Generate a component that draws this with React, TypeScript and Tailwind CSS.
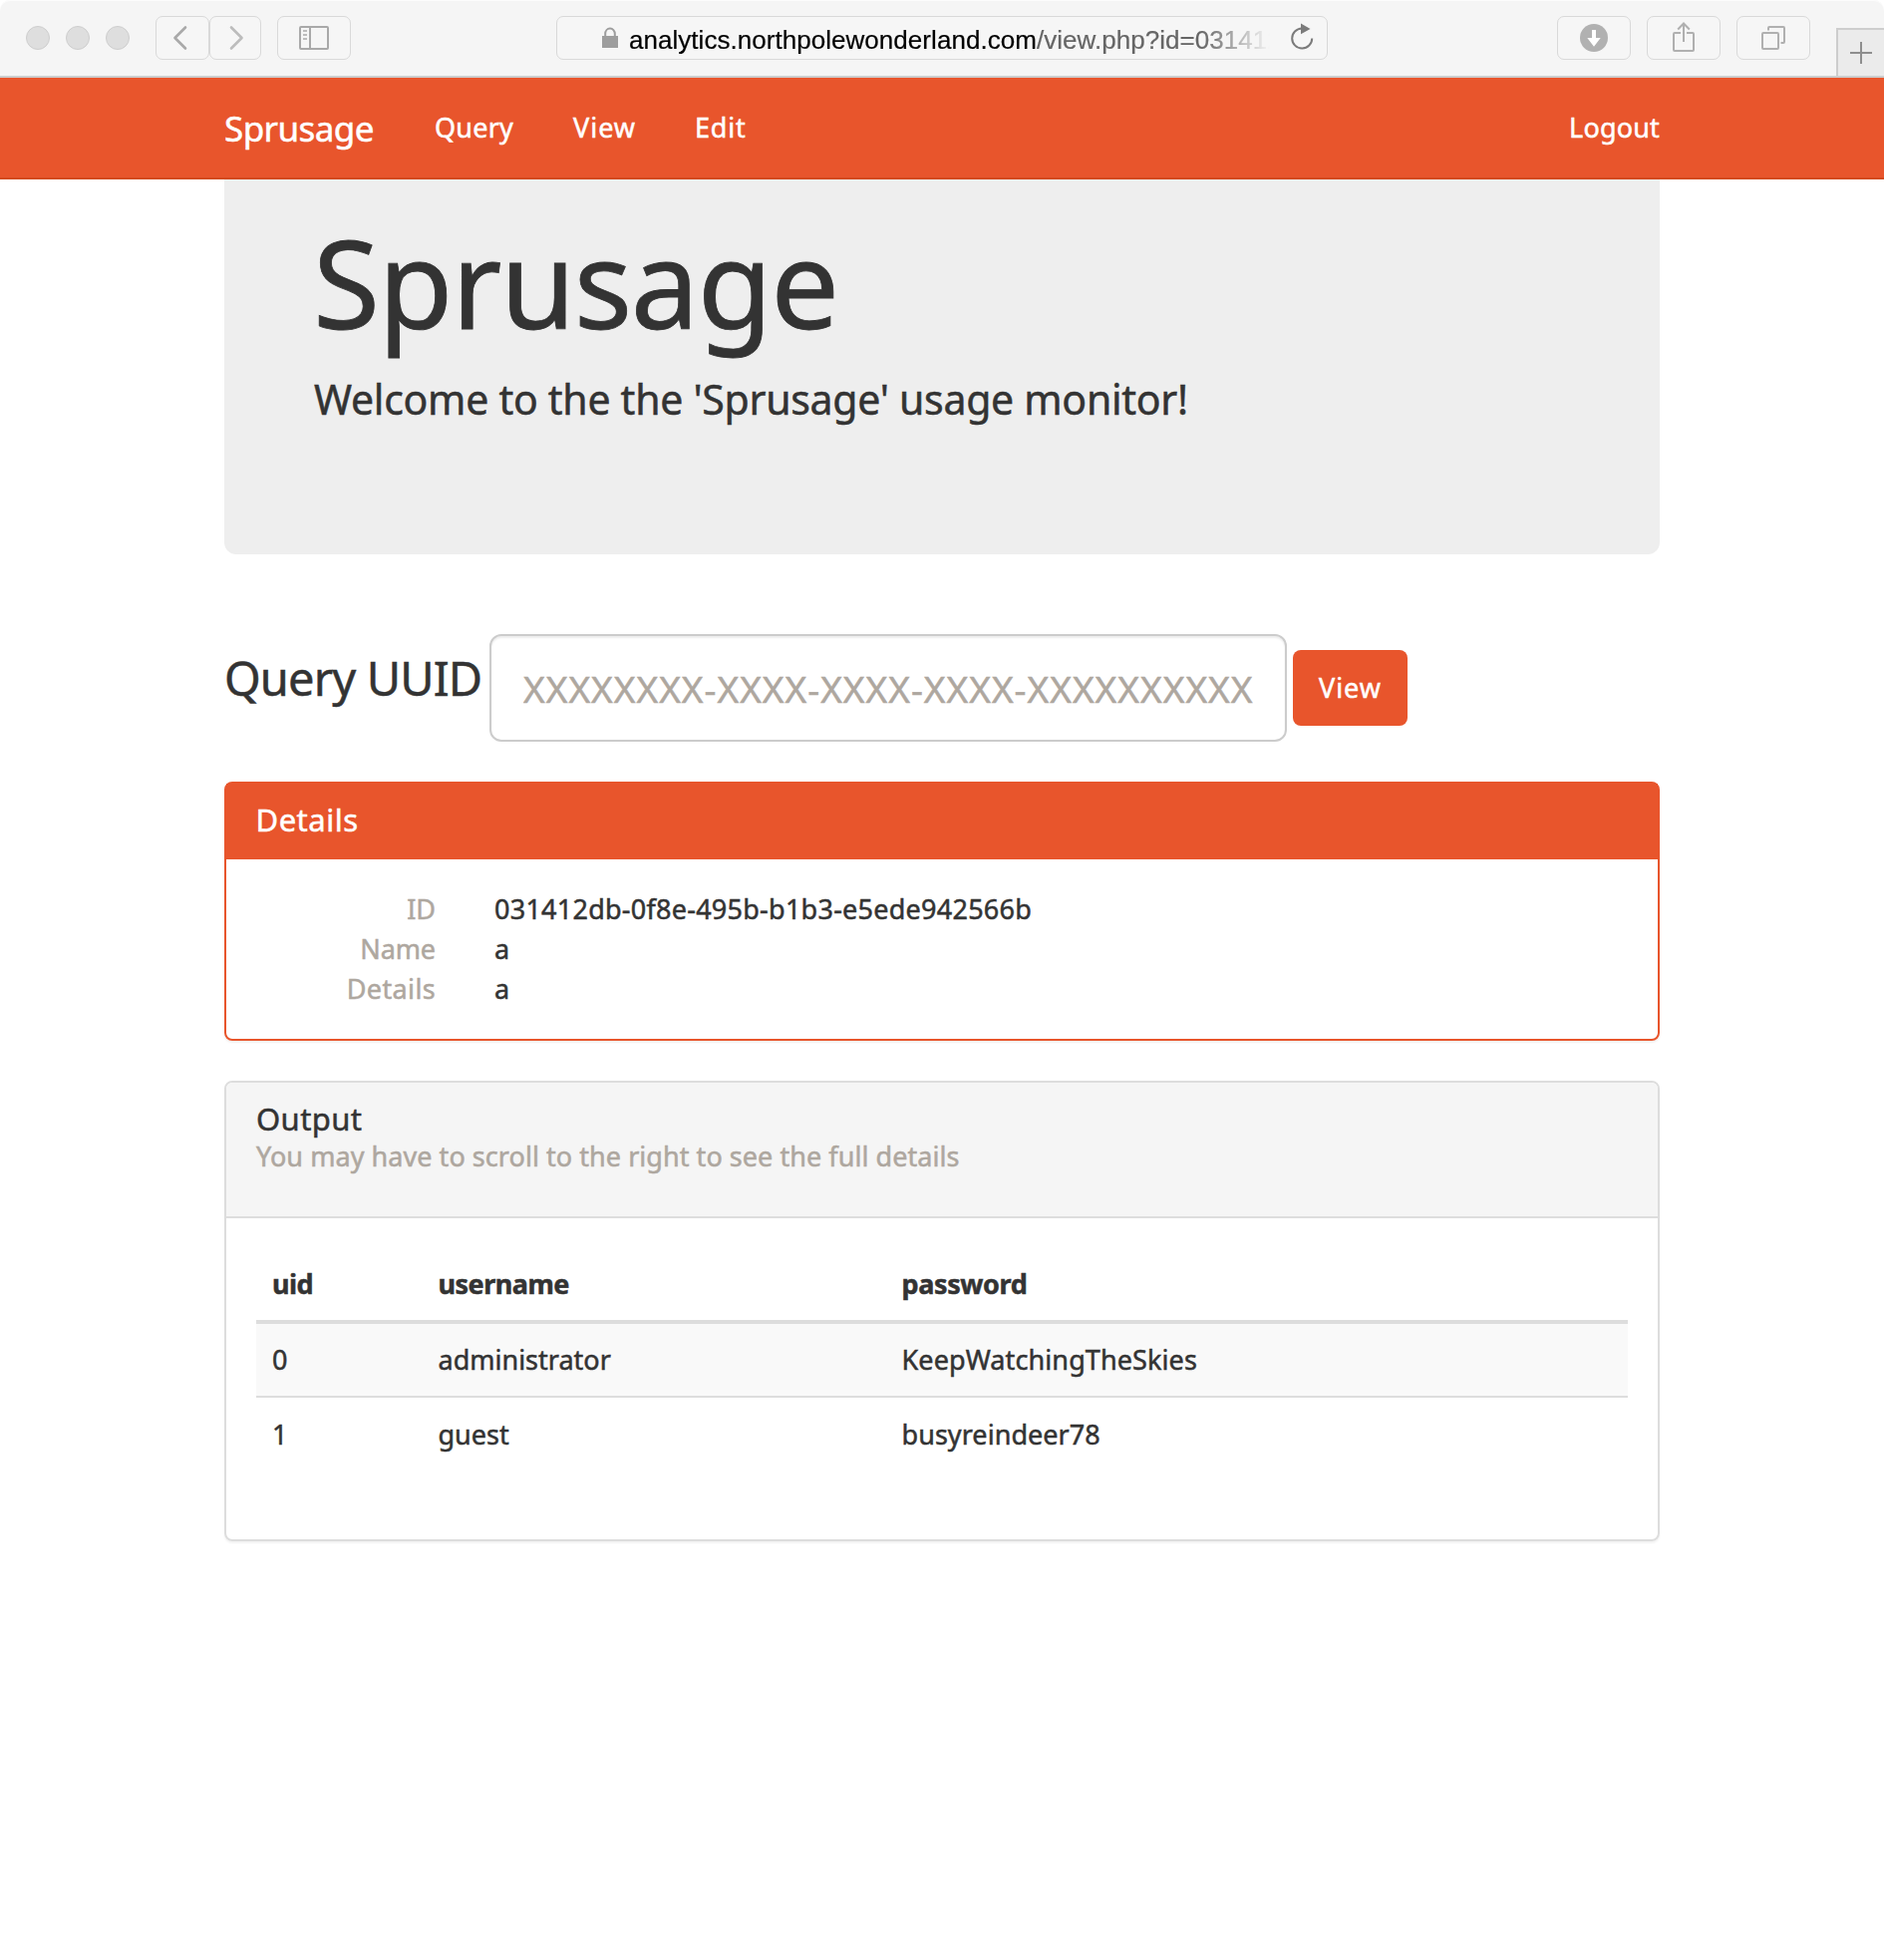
import type { ReactNode } from 'react';

function ToolButton({ className, children }: { className: string; children: ReactNode }) {
  return (
    <button
      className={`flex h-11 shrink-0 items-center justify-center rounded-[7px] border border-[#d9d9d9] bg-[#f6f6f6] ${className}`}
    >
      {children}
    </button>
  );
}

function BrowserBar() {
  return (
    <header className="flex h-[78px] items-start rounded-t-[10px] border-b-2 border-[#cdcdcd] bg-[#f5f5f5] pl-[26px] font-['Liberation_Sans',sans-serif] shadow-[inset_0_1px_0_#fcfcfc]">
      <div className="flex gap-4 pt-[26px]">
        <span className="size-6 rounded-full border border-[#cecece] bg-[#dedede]" />
        <span className="size-6 rounded-full border border-[#cecece] bg-[#dedede]" />
        <span className="size-6 rounded-full border border-[#cecece] bg-[#dedede]" />
      </div>
      <div className="ml-[26px] flex pt-4">
        <ToolButton className="w-[54px]">
          <svg width="52" height="42" viewBox="0 0 52 42" fill="none" stroke="#a9a9a9" strokeWidth="2.6" strokeLinecap="round" strokeLinejoin="round">
            <path d="M29 10.5 18.5 21 29 31.5" />
          </svg>
        </ToolButton>
        <ToolButton className="w-[52px]">
          <svg width="50" height="42" viewBox="0 0 50 42" fill="none" stroke="#bcbcbc" strokeWidth="2.6" strokeLinecap="round" strokeLinejoin="round">
            <path d="M21 10.5 31.5 21 21 31.5" />
          </svg>
        </ToolButton>
        <ToolButton className="ml-4 w-[74px]">
          <svg width="72" height="42" viewBox="0 0 72 42" fill="none" stroke="#a9a9a9" strokeWidth="2">
            <rect x="22" y="10" width="28" height="22" rx="1" />
            <path d="M32 10v22" />
            <path d="M25 14h4M25 18h4M25 22h4" stroke="#bdbdbd" />
          </svg>
        </ToolButton>
      </div>
      <div className="ml-[206px] mt-4 flex h-11 w-[774px] items-center rounded-[7px] border border-[#d9d9d9] bg-[#f6f6f6] pl-[45px]">
        <svg width="16" height="22" viewBox="0 0 16 22" className="shrink-0">
          <path d="M3.2 10V6.8a4.8 5.3 0 0 1 9.6 0V10" fill="none" stroke="#9d9d9d" strokeWidth="2" />
          <rect y="9" width="16" height="12" fill="#9d9d9d" />
        </svg>
        <div className="ml-[11px] w-[646px] whitespace-nowrap pt-[3px] text-[26px] leading-[34px] tracking-[0.04px] text-[#666] [-webkit-text-stroke:0.2px] [mask-image:linear-gradient(to_right,#000_89%,transparent_99.5%)]">
          <span className="text-black">analytics.northpolewonderland.com</span>
          /view.php?id=031412
        </div>
        <svg width="28" height="30" viewBox="0 0 28 30" className="ml-[15px] shrink-0">
          <path d="M14 5.5A10 10 0 1 0 24.2 15.5" fill="none" stroke="#7b7b7b" strokeWidth="2" />
          <path d="M13 .5 22.5 6 13 11.2z" fill="#7b7b7b" />
        </svg>
      </div>
      <div className="ml-auto flex gap-4 pt-4">
        <ToolButton className="w-[74px]">
          <svg width="72" height="42" viewBox="0 0 72 42">
            <circle cx="36" cy="21" r="14" fill="#b1b1b1" />
            <path d="M34 13h4v8h4.7L36 29.8 29.3 21H34z" fill="#fff" />
          </svg>
        </ToolButton>
        <ToolButton className="w-[74px]">
          <svg width="72" height="42" viewBox="0 0 72 42" fill="none" stroke="#b0b0b0" strokeWidth="2">
            <path d="M33 16h-6q-1 0-1 1v16q0 1 1 1h18q1 0 1-1V17q0-1-1-1h-6" />
            <path d="M36 25V6.5M30.2 12.5 36 6.5l5.8 6" />
          </svg>
        </ToolButton>
        <ToolButton className="w-[74px]">
          <svg width="72" height="42" viewBox="0 0 72 42" fill="none" stroke="#b0b0b0" strokeWidth="2">
            <rect x="25" y="16" width="16" height="16" rx="1" />
            <path d="M31 13.5V11q0-1 1-1h14q1 0 1 1v14q0 1-1 1h-2.5" />
          </svg>
        </ToolButton>
      </div>
      <button className="ml-[26px] mt-7 flex h-12 w-12 shrink-0 items-center justify-center border-l-2 border-t-2 border-[#cdcdcd] bg-[#ebebeb]">
        <svg width="22" height="22" viewBox="0 0 22 22" stroke="#8e8e8e" strokeWidth="2">
          <path d="M11 0v22M0 11h22" />
        </svg>
      </button>
    </header>
  );
}

function NavBar() {
  return (
    <nav className="h-[102px] border-b-2 border-[#d34a1f] bg-[#e8552c] text-white">
      <div className="mx-auto flex w-[1440px] text-[27px] leading-[99px]">
        <a className="w-[211px] text-[35px] leading-[101px] tracking-[-0.58px]">Sprusage</a>
        <a className="w-[139px] tracking-[0.21px]">Query</a>
        <a className="w-[122px] tracking-[1px]">View</a>
        <a className="tracking-[0.84px]">Edit</a>
        <a className="ml-auto tracking-[0.18px]">Logout</a>
      </div>
    </nav>
  );
}

function DetailRow({ label, value }: { label: ReactNode; value: string }) {
  return (
    <div className="flex leading-10">
      <dt className="w-[210px] text-right text-[#aea79f]">{label}</dt>
      <dd className="ml-[59px] tracking-[0.25px]">{value}</dd>
    </div>
  );
}

export default function App() {
  return (
    <div className="min-h-[1966px] bg-white font-['Noto_Sans',sans-serif] text-[27px] text-[#333] [-webkit-text-stroke:0.5px]">
      <BrowserBar />
      <NavBar />
      <main className="mx-auto w-[1440px]">
        <section className="h-[376px] rounded-b-xl bg-[#eee] px-[90px] pt-10">
          <h1 className="-ml-px text-[122px] leading-[126px] tracking-[-1.49px] [-webkit-text-stroke:0.8px]">Sprusage</h1>
          <p className="mt-6 text-[41px] leading-[60px] tracking-[-0.28px] whitespace-nowrap">
            Welcome to the the 'Sprusage' usage monitor!
          </p>
        </section>

        <form className="mt-20 flex h-[108px] items-start">
          <label className="w-[266px] text-[47px] leading-[88px] tracking-[-0.86px] whitespace-nowrap">Query UUID</label>
          <input
            className="h-[108px] w-[800px] rounded-xl border-2 border-[#ccc] bg-white px-8 text-[37px] tracking-[1.01px] shadow-[inset_0_2px_2px_rgba(0,0,0,0.075)] placeholder:text-[#aea79f]"
            placeholder="XXXXXXXX-XXXX-XXXX-XXXX-XXXXXXXXXX"
          />
          <button type="button" className="ml-1.5 mt-4 h-[76px] w-[115px] rounded-lg bg-[#e8552c] tracking-[1px] text-white">
            View
          </button>
        </form>

        <section className="mt-10 h-[260px] rounded-lg border-2 border-[#e8552c] shadow-[0_2px_2px_rgba(0,0,0,0.05)]">
          <h3 className="h-[76px] bg-[#e8552c] pl-[29.5px] text-[31px] leading-[72px] tracking-[0.5px] text-white">Details</h3>
          <dl className="pt-[30px]">
            <DetailRow label="ID" value="031412db-0f8e-495b-b1b3-e5ede942566b" />
            <DetailRow label={<span className="tracking-[-0.1px]">Name</span>} value="a" />
            <DetailRow label={<span className="tracking-[0.36px]">Details</span>} value="a" />
          </dl>
        </section>

        <section className="mt-10 h-[462px] rounded-lg border-2 border-[#ddd] shadow-[0_2px_2px_rgba(0,0,0,0.05)]">
          <div className="h-[136px] rounded-t-md border-b-2 border-[#ddd] bg-[#f5f5f5] pl-[30px] pt-4">
            <h3 className="text-[31px] leading-10 tracking-[0.4px]">Output</h3>
            <p className="leading-9 tracking-[0.05px] text-[#aea79f]">
              You may have to scroll to the right to see the full details
            </p>
          </div>
          <div className="px-[30px] pt-[30px]">
            <div className="grid h-[76px] grid-cols-[166.5px_465px_1fr] border-b-4 border-[#ddd] pl-4 font-bold leading-[71px] tracking-[-0.5px]">
              <span>uid</span>
              <span>username</span>
              <span className="tracking-[-0.37px]">password</span>
            </div>
            <div className="grid h-[74px] grid-cols-[166.5px_465px_1fr] border-b-2 border-[#ddd] bg-[#f9f9f9] pl-4 leading-[71px]">
              <span>0</span>
              <span>administrator</span>
              <span className="tracking-[0.1px]">KeepWatchingTheSkies</span>
            </div>
            <div className="grid grid-cols-[166.5px_465px_1fr] pl-4 leading-[73px]">
              <span>1</span>
              <span>guest</span>
              <span className="tracking-[0.05px]">busyreindeer78</span>
            </div>
          </div>
        </section>
      </main>
    </div>
  );
}
